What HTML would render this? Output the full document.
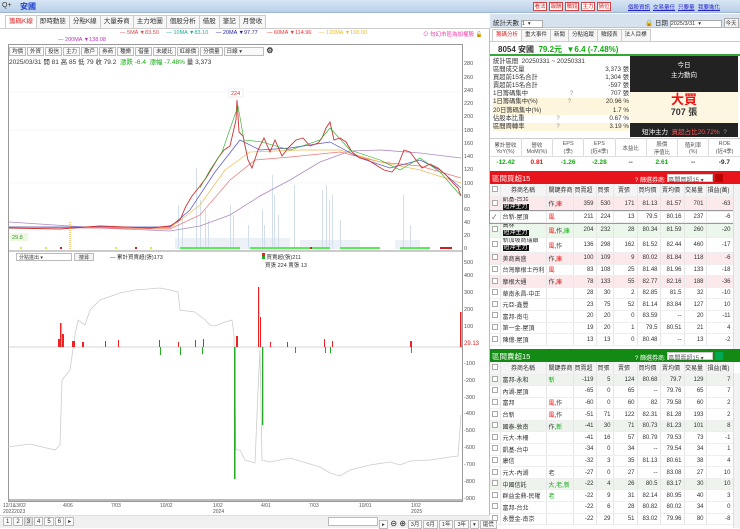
<!DOCTYPE html>
<html><head><meta charset="utf-8">
<style>
*{box-sizing:border-box;margin:0;padding:0}
body{width:740px;height:528px;overflow:hidden;background:#fff;font-family:"Liberation Sans","Noto Sans CJK TC",sans-serif;font-size:6.5px;color:#333;position:relative}
.abs{position:absolute}
.top{left:0;top:0;width:740px;height:13px;background:linear-gradient(#d8e6f5,#b9cfe8);border-bottom:1px solid #9fb6d3}
.btn{position:absolute;top:0;border:1px solid #c44;background:#fff;color:#d22;height:9px;line-height:8px;font-size:5.5px;text-align:center;white-space:nowrap}
.lk{position:absolute;top:1px;color:#22c;text-decoration:underline;font-size:5.5px;white-space:nowrap}
.tabs span{display:inline-block;border:1px solid #ccc;border-bottom:none;padding:0 3px;height:13px;line-height:12px;background:#f7f7f7;margin-right:-1px}
.tb span{display:inline-block;border:1px solid #bbb;padding:0 2px;height:9px;line-height:8px;margin-right:1px;background:#fafafa}
table{border-collapse:collapse;table-layout:fixed}
td{white-space:nowrap;overflow:hidden}
.bt td{border-right:1px solid #e6e6e6;border-bottom:1px solid #eee;height:11.6px;text-align:right;padding-right:2px;font-size:6px}
.bt td:nth-child(1),.bt td:nth-child(2),.bt td:nth-child(3){text-align:left;padding-left:2px}
.bt tr.h td{text-align:center!important;background:#f4f4f4;height:12px}
.cb{display:inline-block;width:6px;height:6px;border:1px solid #aaa;background:#fff}
.dk{background:#111;color:#fff;padding:0 1px}
.r{color:#e11}.g{color:#1a1}
.pk td{background:#fbe9ec}.gn td{background:#ebf7ea}.gy td{background:#eef3ee}
.ax{position:absolute;left:464px;font-size:5.5px;color:#555}
</style></head><body>

<div class="abs top">
 <span class="abs" style="left:2px;top:2px;font-size:7px;color:#333">Q+</span>
 <span class="abs" style="left:20px;top:1px;font-size:8px;color:#1b3fd0;font-weight:bold">安國</span>
 <div class="abs" style="left:533px;top:2px;width:90px;height:10px">
  <span class="btn" style="left:0;width:14px">看法</span><span class="btn" style="left:16px;width:14px">報酬</span><span class="btn" style="left:32px;width:14px">贖錢</span><span class="btn" style="left:48px;width:14px">主力</span><span class="btn" style="left:64px;width:14px">猜位</span>
 </div>
 <div class="abs" style="left:628px;top:2px;width:112px;height:10px">
  <span class="lk" style="left:0">個股資訊</span><span class="lk" style="left:25px">交易量任</span><span class="lk" style="left:50px">只要量</span><span class="lk" style="left:70px">我要進化</span>
 </div>
</div>

<!-- left panel -->
<div class="abs tabs" style="left:5px;top:15px"><span style="color:#d22;background:#fff">籌碼K線</span><span>即時動態</span><span>分點K線</span><span>大量券商</span><span>主力地圖</span><span>個股分析</span><span>借股</span><span>筆記</span><span>月營收</span></div>
<div class="abs" style="left:0;top:28px;width:490px;height:500px;border-top:1px solid #ccc;border-right:1px solid #bbb"></div>
<div class="abs" style="left:120px;top:30px;font-size:5.5px;white-space:nowrap"><span style="color:#d44">— 5MA ▼83.50</span>&nbsp;&nbsp;&nbsp;&nbsp;&nbsp;<span style="color:#2a9">— 10MA ▼83.10</span>&nbsp;&nbsp;&nbsp;&nbsp;&nbsp;<span style="color:#22a">— 20MA ▼97.77</span>&nbsp;&nbsp;&nbsp;&nbsp;&nbsp;&nbsp;<span style="color:#e33">— 60MA ▼114.96</span>&nbsp;&nbsp;&nbsp;&nbsp;&nbsp;<span style="color:#eb3">— 120MA ▼108.00</span></div>
<div class="abs" style="left:58px;top:37px;font-size:5.5px;color:#b3b">— 200MA ▼138.08</div>
<div class="abs" style="left:423px;top:30px;font-size:5.5px;color:#e3a;white-space:nowrap">⊙ 句幻市區為加權股 <span style="color:#000">🔓</span></div>
<div class="abs" style="left:8px;top:44px;width:455px;height:458px;border:1px solid #999"></div>
<div class="abs tb" style="left:9px;top:46px;font-size:5.5px;white-space:nowrap"><span>均價</span><span>外資</span><span>投信</span><span>主力</span><span>散戶</span><span>券商</span><span>種樂</span><span>借量</span><span>未緩比</span><span>紅綠價</span><span>分價量</span><span style="width:40px">日線 ▾</span> <b style="font-size:8px">⚙</b></div>
<div class="abs" style="left:9px;top:56px;font-size:6.5px;white-space:nowrap">2025/03/31 開 81 高 85 低 79 收 79.2 &nbsp;<span class="g">漲跌 -6.4 &nbsp;漲幅 -7.48%</span> 量 3,373</div>

<svg class="abs" style="left:0;top:0" width="490" height="528">
 <g stroke="#f0f0f0" stroke-width="0.6">
  <line x1="9" y1="130" x2="462" y2="130"/><line x1="9" y1="183" x2="462" y2="183"/><line x1="9" y1="92" x2="462" y2="92"/>
 </g>
 <g fill="#c8d6e6" opacity="0.8">
  <rect x="178" y="205" width="1" height="44"/><rect x="182" y="215" width="1" height="34"/><rect x="196" y="168" width="1" height="81"/><rect x="200" y="200" width="1" height="49"/><rect x="205" y="210" width="1" height="39"/><rect x="208" y="220" width="1" height="29"/><rect x="230" y="205" width="1" height="44"/><rect x="233" y="215" width="1" height="34"/><rect x="248" y="225" width="1" height="24"/><rect x="262" y="210" width="1" height="39"/><rect x="264" y="225" width="1" height="24"/><rect x="272" y="175" width="1" height="74"/><rect x="274" y="195" width="1" height="54"/><rect x="278" y="215" width="1" height="34"/><rect x="294" y="185" width="1" height="64"/><rect x="322" y="190" width="1" height="59"/><rect x="326" y="185" width="1" height="64"/><rect x="329" y="200" width="1" height="49"/><rect x="332" y="195" width="1" height="54"/><rect x="340" y="220" width="1" height="29"/><rect x="403" y="195" width="1" height="54"/><rect x="410" y="225" width="1" height="24"/>
  <rect x="175" y="238" width="115" height="11" opacity=".45"/><rect x="300" y="240" width="60" height="9" opacity=".45"/><rect x="395" y="240" width="25" height="9" opacity=".45"/>
 </g>
 <polyline fill="none" stroke="#b08ac0" stroke-width="0.8" points="9,222 100,228 170,231 200,226 230,215 260,196 290,180 320,162 350,151 380,150 420,153 461,158"/>
 <polyline fill="none" stroke="#e77" stroke-width="0.7" points="9,227 170,229 200,215 230,180 255,160 290,157 340,152 380,162 420,166 461,178"/>
 <polyline fill="none" stroke="#eb5" stroke-width="0.7" points="9,227 170,228 200,205 225,170 250,152 300,150 340,150 380,162 420,170 461,183"/>
 <polyline fill="none" stroke="#55c" stroke-width="0.7" points="9,227 170,227 190,210 215,172 240,140 260,150 290,148 330,142 360,158 390,168 420,160 440,170 461,188"/>
 <polyline fill="none" stroke="#c33" stroke-width="0.9" points="9,228 60,229 100,226 150,228 170,226 180,220 186,206 192,196 200,186 206,178 212,168 218,158 224,150 230,146 236,120 237,100 239,132 243,136 248,160 252,168 258,150 264,138 270,152 275,140 282,156 288,148 296,140 303,138 310,146 318,143 322,138 326,128 330,122 334,140 340,138 346,142 352,152 360,158 368,160 376,165 384,170 392,172 398,165 404,150 410,152 416,160 422,168 430,164 438,168 446,175 452,182 458,188 461,196"/>
 <polyline fill="none" stroke="#2a2" stroke-width="0.6" points="200,188 210,170 222,152 238,106 244,140 262,142 290,150 320,140 330,128 350,150 380,160 400,170 420,158 440,172 461,196"/>
 <rect x="229" y="89" width="14" height="8" fill="#fff" stroke="#eee"/><text x="231" y="95" font-size="5.5" fill="#d33">224</text>
 <rect x="10" y="233" width="18" height="8" fill="#eef8e0"/><text x="12" y="239" font-size="5.5" fill="#393">29.8</text>
 <line x1="70" y1="222" x2="70" y2="250" stroke="#f90" stroke-dasharray="1,1"/>
 <g fill="#5e5"><rect x="180" y="247" width="60" height="2"/><rect x="250" y="247" width="80" height="2"/><rect x="340" y="247" width="40" height="2"/><rect x="400" y="247" width="30" height="2"/></g>
 <g fill="#c22"><rect x="60" y="247" width="2" height="2"/><rect x="135" y="247" width="2" height="2"/><rect x="310" y="247" width="2" height="2"/><rect x="440" y="247" width="12" height="2"/></g>
 <g fill="#ce5"><rect x="20" y="247" width="2" height="2"/><rect x="45" y="247" width="2" height="2"/><rect x="115" y="247" width="2" height="2"/><rect x="150" y="247" width="2" height="2"/></g>
 <line x1="9" y1="251" x2="462" y2="251" stroke="#999"/>
 <!-- lower -->
 <line x1="9" y1="347" x2="462" y2="347" stroke="#aaa" stroke-width="0.6"/>
 <polyline fill="none" stroke="#ccc" stroke-width="0.8" points="8,447 30,444 55,450 60,445 62,380 70,370 75,335 78,320 85,325 90,310 100,300 120,293 135,290 160,288 170,290 178,292 180,310 195,312 205,320 210,325 215,326 225,322 232,320 234,335 236,450 240,450 245,460 255,463 258,390 260,350 262,460 270,462 290,458 300,461 320,467 330,473 340,476 350,470 370,465 390,462 400,465 410,461 430,460 450,457 458,456 461,415"/>
 <g fill="#e22">
  <rect x="60" y="323" width="1.5" height="24"/><rect x="62" y="334" width="2" height="13"/><rect x="58" y="339" width="2" height="8"/><rect x="72" y="341" width="3" height="6"/><rect x="82" y="342" width="2" height="5"/><rect x="105" y="341" width="1" height="6"/><rect x="118" y="340" width="1" height="7"/><rect x="159" y="340" width="1" height="7"/><rect x="178" y="342" width="1" height="5"/><rect x="195" y="340" width="1" height="7"/><rect x="203" y="339" width="1" height="8"/><rect x="236" y="336" width="2" height="11"/><rect x="258" y="287" width="1.2" height="60"/><rect x="260" y="317" width="1" height="30"/><rect x="270" y="342" width="1" height="5"/><rect x="287" y="342" width="1" height="5"/><rect x="324" y="339" width="1" height="8"/><rect x="332" y="341" width="1" height="6"/><rect x="410" y="341" width="2" height="6"/><rect x="460" y="312" width="1.5" height="35"/>
 </g>
 <g fill="#2a2">
  <rect x="160" y="347" width="1" height="8"/><rect x="180" y="347" width="1" height="8"/><rect x="202" y="347" width="1" height="7"/><rect x="234" y="347" width="1.5" height="132"/><rect x="262" y="347" width="1.3" height="78"/><rect x="295" y="347" width="1" height="6"/><rect x="325" y="347" width="1" height="6"/><rect x="330" y="347" width="1" height="6"/><rect x="411" y="347" width="1" height="6"/>
 </g>
 <text x="464" y="345" font-size="6" fill="#d22">29.13</text>
 <line x1="9" y1="500" x2="462" y2="500" stroke="#777"/>
</svg>

<div class="abs" style="left:16px;top:253px;width:56px;height:8px;border:1px solid #bbb;font-size:5px;padding-left:2px">分點進出 ▾</div>
<div class="abs" style="left:74px;top:253px;width:20px;height:8px;border:1px solid #bbb;background:#f4f4f4;font-size:5px;text-align:center">搜尋</div>
<div class="abs" style="left:110px;top:253px;font-size:5.5px;white-space:nowrap">— 累計買賣超(張)173</div>
<div class="abs" style="left:262px;top:253px;font-size:5.5px;white-space:nowrap"><span style="display:inline-block;width:3px;height:6px;background:linear-gradient(#e22 50%,#2a2 50%)"></span> 買賣超(張)211<br>&nbsp;&nbsp;買張 224 賣張 13</div>

<div class="ax" style="top:61px">280</div><div class="ax" style="top:75px">260</div><div class="ax" style="top:88px">240</div><div class="ax" style="top:101px">220</div><div class="ax" style="top:114px">200</div><div class="ax" style="top:128px">180</div><div class="ax" style="top:141px">160</div><div class="ax" style="top:154px">140</div><div class="ax" style="top:167px">120</div><div class="ax" style="top:181px">100</div><div class="ax" style="top:194px">80</div><div class="ax" style="top:207px">60</div><div class="ax" style="top:220px">40</div><div class="ax" style="top:233px">20</div><div class="ax" style="top:246px">0</div>
<div class="ax" style="top:260px">500</div><div class="ax" style="top:273px">400</div><div class="ax" style="top:290px">300</div><div class="ax" style="top:307px">200</div><div class="ax" style="top:324px">100</div><div class="ax" style="top:361px">-100</div><div class="ax" style="top:378px">-200</div><div class="ax" style="top:395px">-300</div><div class="ax" style="top:411px">-400</div><div class="ax" style="top:428px">-500</div><div class="ax" style="top:445px">-600</div><div class="ax" style="top:462px">-700</div><div class="ax" style="top:479px">-800</div><div class="ax" style="top:496px">-900</div>

<div class="abs" style="top:503px;left:3px;width:470px;height:12px;font-size:5px;color:#555">
 <span class="abs" style="left:0">12/1&amp;3/02<br>20222023</span><span class="abs" style="left:60px">4/06</span><span class="abs" style="left:108px">7/03</span><span class="abs" style="left:157px">10/02</span><span class="abs" style="left:210px">1/02<br>2024</span><span class="abs" style="left:258px">4/01</span><span class="abs" style="left:306px">7/03</span><span class="abs" style="left:356px">10/01</span><span class="abs" style="left:408px">1/02<br>2025</span>
</div>
<div class="abs" style="left:0;top:515px;width:490px;height:13px;background:#f0f0f0;border-top:1px solid #ddd"></div>
<div class="abs tb" style="left:3px;top:517px;font-size:6px;white-space:nowrap"><span>1</span><span>2</span><span style="background:#ddd">3</span><span>4</span><span>5</span><span>6</span><span>▸</span></div>
<div class="abs tb" style="left:328px;top:517px;font-size:5.5px;white-space:nowrap"><span style="width:50px;background:#fff"></span><span>▸</span> <b style="font-size:7px">⊖ ⊕</b> <span>3月</span><span>6月</span><span>1年</span><span>3年</span><span>▾</span><span>還價</span></div>

<!-- right panel -->
<div class="abs" style="left:490px;top:14px;width:250px;height:14px;background:#d7e2ef;border-bottom:1px solid #b5c5d8"></div>
<div class="abs" style="left:493px;top:17px;font-size:6.5px;white-space:nowrap">統計天數 <span style="display:inline-block;width:22px;height:8px;border:1px solid #aaa;background:#fff;font-size:5.5px">1 &nbsp;▾</span></div>
<div class="abs" style="left:645px;top:17px;font-size:6.5px;white-space:nowrap">🔒 日期 <span style="display:inline-block;width:52px;height:8px;border:1px solid #aaa;background:#fff;font-size:5.5px">2025/3/31 &nbsp;▾</span> <span style="display:inline-block;border:1px solid #aaa;background:#f4f4f4;font-size:5.5px;padding:0 1px">今天</span></div>
<div class="abs tabs" style="left:492px;top:29px;font-size:5.5px;white-space:nowrap"><span style="color:#d22;background:#fff;height:12px;line-height:11px">籌碼分析</span><span style="height:12px;line-height:11px">重大事件</span><span style="height:12px;line-height:11px">新聞</span><span style="height:12px;line-height:11px">分點追蹤</span><span style="height:12px;line-height:11px">贖錢表</span><span style="height:12px;line-height:11px">法人目標</span></div>
<div class="abs" style="left:490px;top:41px;width:250px;height:15px;border-bottom:2px solid #3a3;border-top:1px solid #ccc;font-size:8px;padding:2px 0 0 8px;white-space:nowrap"><b>8054 安國</b> &nbsp;<span class="g" style="font-weight:bold">79.2元 &nbsp;▼6.4 (-7.48%)</span></div>
<div class="abs" style="left:493px;top:58px;width:136px;font-size:6.3px;line-height:8.1px">
 <div>統計區間 &nbsp;20250331 ~ 20250331</div>
 <div>區間成交量<span style="float:right">3,373 張</span></div>
 <div>買超前15名合計<span style="float:right">1,304 張</span></div>
 <div>賣超前15名合計<span style="float:right">-597 張</span></div>
 <div>1日籌碼集中 <span style="margin-left:40px;color:#999">?</span><span style="float:right">707 張</span></div>
 <div style="background:#fdf6dc">1日籌碼集中(%) <span style="margin-left:28px;color:#999">?</span><span style="float:right">20.96 %</span></div>
 <div style="background:#fdf6dc">20日籌碼集中(%)<span style="float:right">1.7 %</span></div>
 <div>佔股本比重 <span style="margin-left:30px;color:#999">?</span><span style="float:right">0.67 %</span></div>
 <div style="background:#fdf6dc">區間周轉率 <span style="margin-left:30px;color:#999">?</span><span style="float:right">3.19 %</span></div>
</div>
<div class="abs" style="left:630px;top:56px;width:108px;height:36px;background:#222;color:#fff;text-align:center;font-size:6.5px;padding-top:5px;line-height:10px">今日<br>主力動向</div>
<div class="abs" style="left:630px;top:92px;width:108px;height:31px;background:#fdf7e2;text-align:center"><div style="color:#e11;font-size:13px;font-weight:bold;line-height:15px">大買</div><div style="font-size:9px;font-weight:bold;line-height:10px">707 張</div></div>
<div class="abs" style="left:630px;top:123px;width:108px;height:14px;background:#222;color:#fff;font-size:6.5px;padding:3px 0 0 12px;white-space:nowrap">短沖主力 &nbsp;<span style="color:#f55">買超占比20.72%</span> &nbsp;<span style="color:#999">?</span></div>
<table class="abs" style="left:490px;top:138px;width:250px;font-size:5.5px;text-align:center;border-top:1px solid #ccc">
<tr style="height:18px;color:#555"><td style="border-right:1px solid #ddd">累計營收<br>YoY(%)</td><td style="border-right:1px solid #ddd">營收<br>MoM(%)</td><td style="border-right:1px solid #ddd">EPS<br>(季)</td><td style="border-right:1px solid #ddd">EPS<br>(近4季)</td><td style="border-right:1px solid #ddd">本益比</td><td style="border-right:1px solid #ddd">股價<br>淨值比</td><td style="border-right:1px solid #ddd">殖利率<br>(%)</td><td>ROE<br>(近4季)</td></tr>
<tr style="height:12px;font-weight:bold;font-size:6.5px;border-top:1px solid #ddd"><td class="g">-12.42</td><td class="r">0.81</td><td class="g">-1.26</td><td class="g">-2.28</td><td>--</td><td class="g">2.61</td><td>--</td><td>-9.7</td></tr>
</table>

<div class="abs" style="left:490px;top:171px;width:250px;height:13px;background:#e8141c;color:#fff;font-size:7.5px;padding:2px 0 0 2px;white-space:nowrap">區間買超15<span style="position:absolute;left:145px;font-size:6px;top:3px">? 篩選券商: <span style="display:inline-block;background:#fff;color:#555;width:46px;height:8px;border:1px solid #ccc">區間買超15 ▾</span> <span style="display:inline-block;background:#b00;width:8px;height:8px"></span></span></div>
<table class="abs bt" style="left:490px;top:184px;width:243px">
<colgroup><col style="width:10px"><col style="width:46px"><col style="width:27px"><col style="width:23px"><col style="width:17px"><col style="width:24px"><col style="width:23px"><col style="width:24px"><col style="width:22px"><col style="width:27px"></colgroup>
<tr class="h"><td><span class="cb"></span></td><td>券商名稱</td><td>關鍵券商</td><td>買賣超</td><td>買張</td><td>賣張</td><td>買均價</td><td>賣均價</td><td>交易量</td><td>損益(萬)</td></tr>
<tr class="pk"><td><span class="cb"></span></td><td style="line-height:7px">凱基-台北<br><span class="dk">短沖主力</span></td><td>作,<span class="r">庫</span></td><td>359</td><td>530</td><td>171</td><td>81.13</td><td>81.57</td><td>701</td><td>-63</td></tr>
<tr style="outline:1px solid #999"><td>✓</td><td>台新-屋頂</td><td class="r">風</td><td>211</td><td>224</td><td>13</td><td>79.5</td><td>80.16</td><td>237</td><td>-6</td></tr>
<tr class="gn"><td><span class="cb"></span></td><td style="line-height:7px">高林<br><span class="dk">短沖主力</span></td><td><span class="r">風</span>,作,<span class="g">庫</span></td><td>204</td><td>232</td><td>28</td><td>80.34</td><td>81.59</td><td>260</td><td>-20</td></tr>
<tr><td><span class="cb"></span></td><td style="line-height:7px">新加坡商瑞銀<br><span class="dk">短沖主力</span></td><td><span class="r">風</span>,作</td><td>136</td><td>298</td><td>162</td><td>81.52</td><td>82.44</td><td>460</td><td>-17</td></tr>
<tr class="pk"><td><span class="cb"></span></td><td>美商高盛</td><td>作,<span class="r">庫</span></td><td>100</td><td>109</td><td>9</td><td>80.02</td><td>81.84</td><td>118</td><td>-6</td></tr>
<tr><td><span class="cb"></span></td><td>台灣摩根士丹利</td><td class="r">風</td><td>83</td><td>108</td><td>25</td><td>81.48</td><td>81.96</td><td>133</td><td>-18</td></tr>
<tr class="pk"><td><span class="cb"></span></td><td>摩根大通</td><td>作,<span class="r">庫</span></td><td>78</td><td>133</td><td>55</td><td>82.77</td><td>82.16</td><td>188</td><td>-36</td></tr>
<tr><td><span class="cb"></span></td><td>華南永昌-中正</td><td></td><td>28</td><td>30</td><td>2</td><td>82.85</td><td>81.5</td><td>32</td><td>-10</td></tr>
<tr><td><span class="cb"></span></td><td>元亞-鑫豐</td><td></td><td>23</td><td>75</td><td>52</td><td>81.14</td><td>83.84</td><td>127</td><td>10</td></tr>
<tr><td><span class="cb"></span></td><td>富邦-南屯</td><td></td><td>20</td><td>20</td><td>0</td><td>83.59</td><td>--</td><td>20</td><td>-11</td></tr>
<tr><td><span class="cb"></span></td><td>第一金-屋頂</td><td></td><td>19</td><td>20</td><td>1</td><td>79.5</td><td>80.51</td><td>21</td><td>4</td></tr>
<tr><td><span class="cb"></span></td><td>陳億-屋頂</td><td></td><td>13</td><td>13</td><td>0</td><td>80.48</td><td>--</td><td>13</td><td>-2</td></tr>
</table>
<div class="abs" style="left:733px;top:184px;width:7px;height:165px;background:#f3f3f3;border-left:1px solid #ddd"></div>

<div class="abs" style="left:490px;top:349px;width:250px;height:13px;background:#138a13;color:#fff;font-size:7.5px;padding:2px 0 0 2px;white-space:nowrap">區間賣超15<span style="position:absolute;left:145px;font-size:6px;top:3px">? 篩選券商: <span style="display:inline-block;background:#fff;color:#555;width:46px;height:8px;border:1px solid #ccc">區間賣超15 ▾</span> <span style="display:inline-block;background:#0a5;width:8px;height:8px"></span></span></div>
<table class="abs bt" style="left:490px;top:362px;width:243px">
<colgroup><col style="width:10px"><col style="width:46px"><col style="width:27px"><col style="width:23px"><col style="width:17px"><col style="width:24px"><col style="width:23px"><col style="width:24px"><col style="width:22px"><col style="width:27px"></colgroup>
<tr class="h"><td><span class="cb"></span></td><td>券商名稱</td><td>關鍵券商</td><td>買賣超</td><td>買張</td><td>賣張</td><td>買均價</td><td>賣均價</td><td>交易量</td><td>損益(萬)</td></tr>
<tr class="gy"><td><span class="cb"></span></td><td>富邦-永和</td><td class="g">新</td><td>-119</td><td>5</td><td>124</td><td>80.68</td><td>79.7</td><td>129</td><td>7</td></tr>
<tr><td><span class="cb"></span></td><td>內湖-屋頂</td><td></td><td>-65</td><td>0</td><td>65</td><td>--</td><td>79.76</td><td>65</td><td>7</td></tr>
<tr><td><span class="cb"></span></td><td>富邦</td><td><span class="r">風</span>,作</td><td>-60</td><td>0</td><td>60</td><td>82</td><td>79.58</td><td>60</td><td>2</td></tr>
<tr><td><span class="cb"></span></td><td>台新</td><td><span class="r">風</span>,作</td><td>-51</td><td>71</td><td>122</td><td>82.31</td><td>81.28</td><td>193</td><td>2</td></tr>
<tr class="gy"><td><span class="cb"></span></td><td>國泰-敦南</td><td>作,<span class="g">新</span></td><td>-41</td><td>30</td><td>71</td><td>80.73</td><td>81.23</td><td>101</td><td>8</td></tr>
<tr><td><span class="cb"></span></td><td>元大-木柵</td><td></td><td>-41</td><td>16</td><td>57</td><td>80.79</td><td>79.53</td><td>73</td><td>-1</td></tr>
<tr><td><span class="cb"></span></td><td>凱基-台中</td><td></td><td>-34</td><td>0</td><td>34</td><td>--</td><td>79.54</td><td>34</td><td>1</td></tr>
<tr><td><span class="cb"></span></td><td>康信</td><td></td><td>-32</td><td>3</td><td>35</td><td>81.13</td><td>80.61</td><td>38</td><td>4</td></tr>
<tr><td><span class="cb"></span></td><td>元大-內湖</td><td>老</td><td>-27</td><td>0</td><td>27</td><td>--</td><td>83.08</td><td>27</td><td>10</td></tr>
<tr class="gy"><td><span class="cb"></span></td><td>中國信託</td><td class="g">大,老,新</td><td>-22</td><td>4</td><td>26</td><td>80.5</td><td>83.17</td><td>30</td><td>10</td></tr>
<tr><td><span class="cb"></span></td><td>群益金鼎-民權</td><td class="g">老</td><td>-22</td><td>9</td><td>31</td><td>82.14</td><td>80.95</td><td>40</td><td>3</td></tr>
<tr><td><span class="cb"></span></td><td>富邦-台北</td><td></td><td>-22</td><td>6</td><td>28</td><td>80.82</td><td>80.02</td><td>34</td><td>0</td></tr>
<tr><td><span class="cb"></span></td><td>永豐金-南京</td><td></td><td>-22</td><td>29</td><td>51</td><td>83.02</td><td>79.96</td><td>80</td><td>-8</td></tr>
</table>
<div class="abs" style="left:733px;top:373px;width:7px;height:155px;background:#f3f3f3;border-left:1px solid #ddd"></div>
</body></html>
